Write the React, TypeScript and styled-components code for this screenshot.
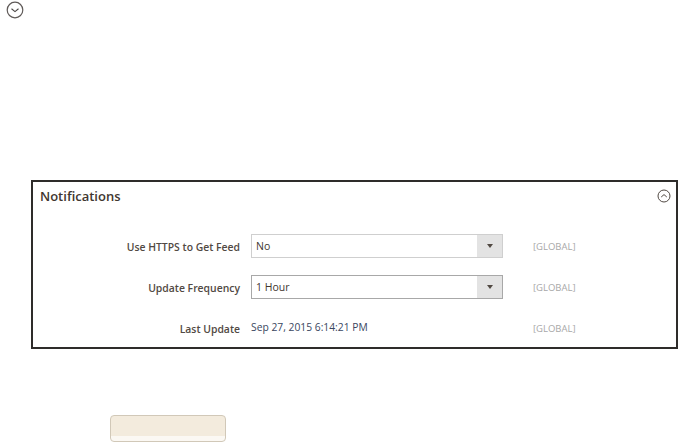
import { createGlobalStyle } from "styled-components"
import styled from "styled-components"

const GlobalStyle = createGlobalStyle`
	html, body {
		margin: 0;
		padding: 0;
		background: #fff;
	}

	body {
		font-family: "Open Sans", "Liberation Sans", sans-serif;
		overflow: hidden;
	}
`

const Page = styled.div`
	width: 679px;
	height: 443px;
	display: flex;
	flex-direction: column;
	align-items: flex-start;
	overflow: hidden;
`

const TopToggle = styled.svg`
	display: block;
	width: 18px;
	height: 18px;
	margin: 1px 0 0 6px;
`

const Panel = styled.section`
	box-sizing: border-box;
	width: 647px;
	height: 169px;
	margin: 161px 0 0 31px;
	border: 2px solid #2e2c2a;
	display: flex;
	flex-direction: column;
`

const PanelHeader = styled.header`
	display: flex;
	justify-content: space-between;
	align-items: center;
	height: 27px;
	padding: 0 5px 0 7px;
`

const PanelTitle = styled.h2`
	margin: 0;
	font-size: 13px;
	font-weight: 600;
	color: #41362f;
`

const Rows = styled.div`
	display: flex;
	flex-direction: column;
	gap: 17px;
	margin-top: 25px;
`

const Row = styled.div`
	display: grid;
	grid-template-columns: 207px 252px auto;
	column-gap: 11px;
	align-items: center;
	height: 24px;
`

const Label = styled.div`
	text-align: right;
	font-size: 10.4px;
	font-weight: 600;
	color: #514943;
	padding-top: 1px;
`

const Select = styled.div`
	box-sizing: border-box;
	height: 24px;
	border: 1px solid ${(p: { $dark?: boolean }) => (p.$dark ? "#a8a8a8" : "#cfcfcf")};
	display: flex;
	align-items: center;
	justify-content: space-between;
	font-size: 10.5px;
	color: #41362f;
	padding-left: 4px;
`

const SelectArrow = styled.div`
	width: 25px;
	align-self: stretch;
	background: #e3e3e3;
	display: flex;
	align-items: center;
	justify-content: center;

	&::after {
		content: "";
		border-left: 3.5px solid transparent;
		border-right: 3.5px solid transparent;
		border-top: 4px solid #514943;
	}
`

const DateValue = styled.div`
	font-size: 10.3px;
	color: #3a4660;
	margin-top: -3px;
`

const Scope = styled.div`
	font-size: 9.5px;
	color: #a8a8a8;
	margin-left: 19px;
	padding-top: 1px;
`

const SaveButton = styled.div`
	box-sizing: border-box;
	width: 116px;
	height: 27px;
	margin: 66px 0 0 110px;
	border: 1px solid #d1c8b8;
	border-radius: 4px;
	background: linear-gradient(#f3ebdd 0 80%, #fbf8f3 80%);
`

const rows = [
	{ label: "Use HTTPS to Get Feed", value: "No" },
	{ label: "Update Frequency", value: "1 Hour", dark: true },
]

export default function App() {
	return (
		<Page>
			<GlobalStyle />
			<TopToggle viewBox="0 0 18 18" fill="none">
				<circle cx="9" cy="9" r="7.8" stroke="#5f5a58" strokeWidth="1.2" />
				<path d="M5.5 7.8 L9 10.6 L12.5 7.8" stroke="#4a4644" strokeWidth="1.1" />
			</TopToggle>
			<Panel>
				<PanelHeader>
					<PanelTitle>Notifications</PanelTitle>
					<svg width="14" height="14" viewBox="0 0 14 14" fill="none">
						<circle cx="7" cy="7" r="6" stroke="#514943" strokeWidth="1" />
						<path d="M4.2 8 L7 5.6 L9.8 8" stroke="#514943" strokeWidth="1" />
					</svg>
				</PanelHeader>
				<Rows>
					{rows.map((row) => (
						<Row key={row.label}>
							<Label>{row.label}</Label>
							<Select $dark={row.dark}>
								{row.value}
								<SelectArrow />
							</Select>
							<Scope>[GLOBAL]</Scope>
						</Row>
					))}
					<Row>
						<Label>Last Update</Label>
						<DateValue>Sep 27, 2015 6:14:21 PM</DateValue>
						<Scope>[GLOBAL]</Scope>
					</Row>
				</Rows>
			</Panel>
			<SaveButton />
		</Page>
	)
}
